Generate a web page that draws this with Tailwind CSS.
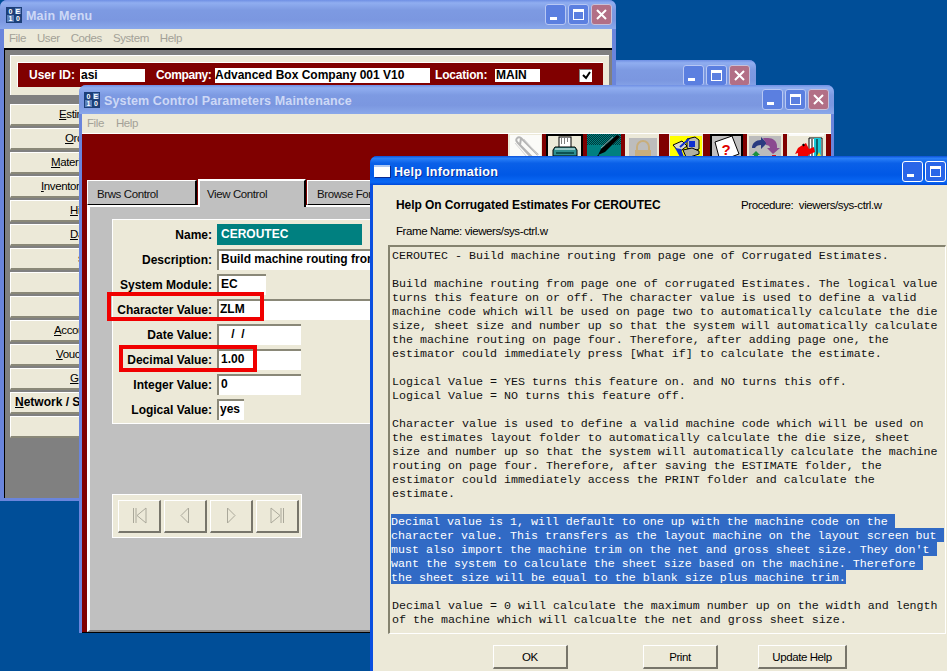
<!DOCTYPE html>
<html>
<head>
<meta charset="utf-8">
<script src="https://cdn.jsdelivr.net/npm/@tailwindcss/browser@4"></script>
</head>
<body class="m-0">
<div class="relative w-[947px] h-[671px] overflow-hidden bg-[#004e98] font-['Liberation_Sans',sans-serif] text-[11.5px] tracking-[-0.4px] leading-[14px] text-black">

  <!-- Second window, behind -->
  <div class="absolute left-[300px] top-[60px] w-[456px] h-[120px] rounded-t-[7px] bg-[#6a85dc]">
    <div class="h-[29px] rounded-t-[7px] pr-[6px] pt-[5px] flex justify-end gap-[2px] bg-[linear-gradient(180deg,#6f8fe4_0%,#90aef0_10%,#7d9ae2_35%,#7b97e0_70%,#8aa8ea_100%)]">
      <div class="relative w-[21px] h-[21px] rounded-[3px] border border-[#b8c8f4] bg-[#5b7fe0]"><div class="absolute left-[4px] bottom-[4px] w-[7px] h-[3px] bg-white"></div></div>
      <div class="relative w-[21px] h-[21px] rounded-[3px] border border-[#b8c8f4] bg-[#5b7fe0]"><div class="absolute left-[4px] top-[4px] w-[11px] h-[11px] border border-white border-t-[3px]"></div></div>
      <div class="w-[21px] h-[21px] rounded-[3px] border border-[#c8c0d8] bg-[#b26f86] flex items-center justify-center"><svg width="13" height="13" viewBox="0 0 13 13"><path d="M2 2l9 9M11 2l-9 9" stroke="#fff" stroke-width="2"/></svg></div>
    </div>
  </div>

  <!-- Main Menu -->
  <div class="absolute left-0 top-0 w-[616px] h-[501px] rounded-t-[7px] bg-[#6a85dc] px-[4px] pb-[3px] flex flex-col">
    <div class="-mx-[4px] h-[29px] shrink-0 rounded-t-[7px] pl-[6px] pr-[4px] flex items-center bg-[linear-gradient(180deg,#6f8fe4_0%,#90aef0_10%,#7d9ae2_35%,#7b97e0_70%,#8aa8ea_100%)]">
      <div class="w-[16px] h-[16px] grid grid-cols-2 grid-rows-2 gap-[1px] bg-[#1c3f78] p-[1px] text-[7px] leading-[7px] font-bold text-center text-white"><span class="bg-[#1c3f78]">0</span><span class="bg-[#5a7fb8]">E</span><span class="bg-[#5a7fb8]">1</span><span class="bg-[#1c3f78]">0</span></div>
      <span class="ml-[4px] mt-[3px] font-bold text-[12.5px] tracking-[0.2px] text-[#cdd8f6]">Main Menu</span>
      <div class="ml-auto flex gap-[2px]">
        <div class="relative w-[21px] h-[21px] rounded-[3px] border border-[#b8c8f4] bg-[#5b7fe0]"><div class="absolute left-[4px] bottom-[4px] w-[7px] h-[3px] bg-white"></div></div>
        <div class="relative w-[21px] h-[21px] rounded-[3px] border border-[#b8c8f4] bg-[#5b7fe0]"><div class="absolute left-[4px] top-[4px] w-[11px] h-[11px] border border-white border-t-[3px]"></div></div>
        <div class="w-[21px] h-[21px] rounded-[3px] border border-[#c8c0d8] bg-[#b26f86] flex items-center justify-center"><svg width="13" height="13" viewBox="0 0 13 13"><path d="M2 2l9 9M11 2l-9 9" stroke="#fff" stroke-width="2"/></svg></div>
      </div>
    </div>
    <div class="h-[19px] shrink-0 bg-[#ece9d8] flex items-center gap-[11px] pl-[5px] pb-[1px] text-[#a3a197]"><span>File</span><span>User</span><span>Codes</span><span>System</span><span>Help</span></div>
    <div class="flex-1 border-t-2 border-l border-black bg-[#808080] pt-[5px] pl-[5px] pr-[3px]">
      <div class="h-[40px] bg-[#ece9d8] border-t border-l border-white pt-[6px] pl-[6px] pr-[6px]">
        <div class="h-[25px] bg-[#800000] border-t border-l border-white flex items-center text-white font-bold text-[12px] tracking-normal">
          <span class="ml-[11px] w-[51px]">User ID:</span>
          <div class="w-[65px] h-[13px] bg-white text-black leading-[13px] pl-px">asi</div>
          <span class="ml-[11px] w-[59px] tracking-[-0.4px]">Company:</span>
          <div class="w-[215px] h-[15px] bg-white text-black leading-[15px]">Advanced Box Company 001 V10</div>
          <span class="ml-[5px] w-[60px] tracking-[-0.2px]">Location:</span>
          <div class="w-[45px] h-[13px] bg-white text-black leading-[13px] pl-px">MAIN</div>
          <div class="ml-[39px] w-[13px] h-[13px] bg-white border-t border-l border-[#808080] flex items-center justify-center"><svg width="9" height="9" viewBox="0 0 9 9"><path d="M1 4l3 3 4-6" fill="none" stroke="#000" stroke-width="2"/></svg></div>
        </div>
      </div>
      <div class="mt-[9px] flex flex-col gap-[2px] w-[150px]">
        <div class="h-[22px] bg-[#ece9d8] border-t border-l border-white border-b-2 border-r-2 border-b-[#8a8878] border-r-[#8a8878] leading-[19px] pl-[48px] whitespace-nowrap"><u>E</u>stimating</div>
        <div class="h-[22px] bg-[#ece9d8] border-t border-l border-white border-b-2 border-r-2 border-b-[#8a8878] border-r-[#8a8878] leading-[19px] pl-[54px] whitespace-nowrap"><u>O</u>rders</div>
        <div class="h-[22px] bg-[#ece9d8] border-t border-l border-white border-b-2 border-r-2 border-b-[#8a8878] border-r-[#8a8878] leading-[19px] pl-[40px] whitespace-nowrap"><u>M</u>aterials</div>
        <div class="h-[22px] bg-[#ece9d8] border-t border-l border-white border-b-2 border-r-2 border-b-[#8a8878] border-r-[#8a8878] leading-[19px] pl-[30px] whitespace-nowrap"><u>I</u>nventory Control</div>
        <div class="h-[22px] bg-[#ece9d8] border-t border-l border-white border-b-2 border-r-2 border-b-[#8a8878] border-r-[#8a8878] leading-[19px] pl-[59px] whitespace-nowrap"><u>H</u>istory</div>
        <div class="h-[22px] bg-[#ece9d8] border-t border-l border-white border-b-2 border-r-2 border-b-[#8a8878] border-r-[#8a8878] leading-[19px] pl-[59px] whitespace-nowrap"><u>D</u>ata</div>
        <div class="h-[22px] bg-[#ece9d8] border-t border-l border-white border-b-2 border-r-2 border-b-[#8a8878] border-r-[#8a8878] leading-[19px] pl-[67px] whitespace-nowrap">s</div>
        <div class="h-[22px] bg-[#ece9d8] border-t border-l border-white border-b-2 border-r-2 border-b-[#8a8878] border-r-[#8a8878]"></div>
        <div class="h-[22px] bg-[#ece9d8] border-t border-l border-white border-b-2 border-r-2 border-b-[#8a8878] border-r-[#8a8878]"></div>
        <div class="h-[22px] bg-[#ece9d8] border-t border-l border-white border-b-2 border-r-2 border-b-[#8a8878] border-r-[#8a8878] leading-[19px] pl-[43px] whitespace-nowrap"><u>A</u>ccounts</div>
        <div class="h-[22px] bg-[#ece9d8] border-t border-l border-white border-b-2 border-r-2 border-b-[#8a8878] border-r-[#8a8878] leading-[19px] pl-[45px] whitespace-nowrap"><u>V</u>ouchers</div>
        <div class="h-[22px] bg-[#ece9d8] border-t border-l border-white border-b-2 border-r-2 border-b-[#8a8878] border-r-[#8a8878] leading-[19px] pl-[59px] whitespace-nowrap"><u>G</u>eneral</div>
        <div class="h-[22px] bg-[#ece9d8] border-t border-l border-white border-b-2 border-r-2 border-b-[#8a8878] border-r-[#8a8878] leading-[19px] pl-[4px] font-bold text-[12px] tracking-normal whitespace-nowrap"><u>N</u>etwork / System</div>
        <div class="h-[22px] bg-[#ece9d8] border-t border-l border-white border-b-2 border-r-2 border-b-[#8a8878] border-r-[#8a8878]"></div>
      </div>
    </div>
  </div>

  <!-- System Control Parameters Maintenance -->
  <div class="absolute left-[79px] top-[85px] w-[755px] h-[548px] rounded-t-[7px] bg-[#6a85dc] px-[3px] flex flex-col">
    <div class="-mx-[3px] h-[29px] shrink-0 rounded-t-[7px] pl-[5px] pr-[5px] flex items-center bg-[linear-gradient(180deg,#6f8fe4_0%,#90aef0_10%,#7d9ae2_35%,#7b97e0_70%,#8aa8ea_100%)]">
      <div class="w-[16px] h-[16px] grid grid-cols-2 grid-rows-2 gap-[1px] bg-[#1c3f78] p-[1px] text-[7px] leading-[7px] font-bold text-center text-white"><span class="bg-[#1c3f78]">0</span><span class="bg-[#5a7fb8]">E</span><span class="bg-[#5a7fb8]">1</span><span class="bg-[#1c3f78]">0</span></div>
      <span class="ml-[4px] mt-[3px] font-bold text-[12.5px] tracking-[0.13px] text-[#cdd8f6]">System Control Parameters Maintenance</span>
      <div class="ml-auto flex gap-[2px]">
        <div class="relative w-[21px] h-[21px] rounded-[3px] border border-[#b8c8f4] bg-[#5b7fe0]"><div class="absolute left-[4px] bottom-[4px] w-[7px] h-[3px] bg-white"></div></div>
        <div class="relative w-[21px] h-[21px] rounded-[3px] border border-[#b8c8f4] bg-[#5b7fe0]"><div class="absolute left-[4px] top-[4px] w-[11px] h-[11px] border border-white border-t-[3px]"></div></div>
        <div class="w-[21px] h-[21px] rounded-[3px] border border-[#c8c0d8] bg-[#b26f86] flex items-center justify-center"><svg width="13" height="13" viewBox="0 0 13 13"><path d="M2 2l9 9M11 2l-9 9" stroke="#fff" stroke-width="2"/></svg></div>
      </div>
    </div>
    <div class="h-[19px] shrink-0 bg-[#ece9d8] flex items-center gap-[12px] pl-[5px] pb-[1px] text-[#a3a197]"><span>File</span><span>Help</span></div>
    <div class="flex-1 min-h-0 border-t border-white bg-[#800000] flex flex-col pl-[5px] pr-[5px] border-b border-b-black">
      <div class="h-[45px] shrink-0 flex items-start justify-end gap-[3px]">
        <svg class="block" width="34" height="23" viewBox="0 0 34 23"><rect width="34" height="23" fill="#ece9d8"/><rect x="2" y="1" width="31" height="22" fill="#fbfbf8"/><path d="M9 8c-2-3 1-6 4-4l17 17M12 11l12 12M9 8l14 15M13 4l-1 7" fill="none" stroke="#b4b4b4" stroke-width="2"/><path d="M7 9l12 14M16 5l14 16" fill="none" stroke="#d5d5d5" stroke-width="1"/></svg>
        <svg class="block ml-[1px]" width="37" height="23" viewBox="0 0 37 23"><rect width="37" height="23" fill="#ece9d8"/><path d="M1 23V1h35v22" fill="none" stroke="#000" stroke-width="2"/><rect x="13" y="3" width="12" height="11" fill="#fff" stroke="#000"/><path d="M15 5h1M18 5h1M21 5h1M15 7h1M18 7h1M21 7h1M15 9h1M18 9h1" stroke="#000"/><path d="M9 13h20l2 3v6H7v-6z" fill="#2f8f8f" stroke="#000"/><path d="M9 15h20" stroke="#fff"/><path d="M10 19h18" stroke="#0c5252" stroke-width="2"/></svg>
        <svg class="block ml-[1px]" width="34" height="23" viewBox="0 0 34 23"><defs><pattern id="dth" width="2" height="2" patternUnits="userSpaceOnUse"><rect width="2" height="2" fill="#008080"/><rect width="1" height="1" fill="#003838"/><rect x="1" y="1" width="1" height="1" fill="#003838"/></pattern></defs><rect width="34" height="23" fill="#008080"/><rect width="34" height="11" fill="url(#dth)"/><path d="M30 1L14 15l-3 6 7-3L33 3z" fill="#000"/><path d="M26 3L14 14" stroke="#9a9a9a"/><path d="M12 21l-3 2" stroke="#000"/></svg>
        <svg class="block ml-[1px]" width="34" height="23" viewBox="0 0 34 23"><rect width="34" height="23" fill="#ece9d8"/><rect x="4" y="4" width="28" height="19" fill="#bdbdbd"/><path d="M12 17v-4a6 6 0 0 1 12 0v4" fill="none" stroke="#c8ae7c" stroke-width="2"/><rect x="10" y="16" width="16" height="7" fill="#c8ae7c"/></svg>
        <div class="w-[4px]"></div>
        <svg class="block" width="34" height="23" viewBox="0 0 34 23"><rect width="34" height="23" fill="#ece9d8"/><rect x="1" y="2" width="32" height="21" fill="#ffff00"/><path d="M4 11l9-4 5 5-8 6z" fill="#d8d8c8" stroke="#000"/><path d="M6 14l5 9h4l-3-8z" fill="#1030d0"/><path d="M18 5l8-2 4 3v9l-5 2-7-3z" fill="#c0c0b0" stroke="#000"/><path d="M20 7h6v6h-6z" fill="#1030d0"/><path d="M14 16l9-2 7 3v3l-9 3h-4z" fill="#b0b0a0" stroke="#000"/><path d="M11 13l9-8" stroke="#1030d0" stroke-width="2"/></svg>
        <svg class="block ml-[4px]" width="33" height="23" viewBox="0 0 33 23"><rect width="33" height="23" fill="#c0c0c0"/><path d="M1 23V1h31v22" fill="none" stroke="#000" stroke-width="2"/><path d="M5 8l17-6 7 18-8 3H9z" fill="#fff" stroke="#000"/><text x="16" y="21" font-family="Liberation Sans" font-weight="700" font-size="15" fill="#e00000" text-anchor="middle">?</text></svg>
        <svg class="block ml-[1px]" width="36" height="23" viewBox="0 0 36 23"><rect width="36" height="23" fill="#ece9d8"/><rect x="2" y="2" width="32" height="21" fill="#bcbcbc"/><path d="M5 14c0-5 4-8 9-8V3l6 6-6 6v-4c-3 0-5 1-6 3z" fill="#2a3a80"/><path d="M16 4h5c5 0 9 3 9 8v2h3l-7 6-6-6h3c0-2-2-3-4-3v-2z" fill="#8a4a90"/><path d="M9 17l4 4H5z" fill="#1a9040"/><rect x="7" y="21" width="4" height="2" fill="#1a9040"/><rect x="25" y="21" width="4" height="2" fill="#d01020"/></svg>
        <svg class="block ml-[1px]" width="39" height="23" viewBox="0 0 39 23"><rect width="39" height="23" fill="#ece9d8"/><rect x="2" y="0" width="35" height="2" fill="#fbfbf8"/><path d="M22 4h13v19H22z" fill="#fff" stroke="#000"/><path d="M27 4h7v19h-7z" fill="#18c8d8"/><path d="M25 5v18M30 5v18" stroke="#000"/><path d="M32 18l2 4h-4z" fill="#f0e020"/><path d="M14 12l5-3 3 6 5-2 1 5-7 3v2H11v-4l-3 1 3-6z" fill="#f00000"/><path d="M16 10l1 2" stroke="#000" stroke-width="2"/></svg>
      </div>
      <div class="h-[26px] shrink-0 flex items-start text-[#111]">
        <div class="mt-[1px] w-[110px] h-[25px] bg-[#c0c0c0] border-t border-l border-white border-r-2 border-r-black border-b border-b-black leading-[26px] pl-[9px]">Brws Control</div>
        <div class="relative z-10 ml-[1px] w-[108px] h-[28px] bg-[#c0c0c0] border-t-2 border-l-2 border-white border-r-2 border-r-black leading-[26px] pl-[7px]">View Control</div>
        <div class="ml-[1px] mt-[1px] w-[110px] h-[25px] bg-[#c0c0c0] border-t border-l border-white border-b border-b-black leading-[26px] pl-[9px] whitespace-nowrap">Browse Form</div>
      </div>
      <div class="flex-1 min-h-0 bg-[#c0c0c0] border-t-2 border-l-[3px] border-white border-b-2 border-b-[#808080] pt-[12px] pl-[22px]">
        <div class="w-[500px] h-[205px] bg-[#ece9d8] border border-white pt-[4px] font-bold text-[12px] tracking-normal flex flex-col gap-[4px]">
          <div class="h-[21px] flex items-center gap-[5px]"><label class="w-[99px] text-right">Name:</label><div class="w-[145px] h-[21px] bg-[#008080] text-white leading-[20px] pl-[4px]">CEROUTEC</div></div>
          <div class="h-[21px] flex items-center gap-[5px]"><label class="w-[99px] text-right">Description:</label><div class="w-[300px] h-[21px] bg-white border-t-2 border-l-2 border-[#8a8878] leading-[17px] pl-[2px] whitespace-nowrap">Build machine routing from page one of Corrugated Estimates</div></div>
          <div class="h-[21px] flex items-center gap-[5px]"><label class="w-[99px] text-right">System Module:</label><div class="w-[49px] h-[21px] bg-white border-t-2 border-l-2 border-[#8a8878] leading-[17px] pl-[2px]">EC</div></div>
          <div class="h-[21px] flex items-center gap-[5px]"><label class="w-[99px] text-right">Character Value:</label><div class="w-[300px] h-[21px] bg-white border-t-2 border-l-2 border-[#8a8878] leading-[17px] pl-[1px]">ZLM</div></div>
          <div class="h-[21px] flex items-center gap-[5px]"><label class="w-[99px] text-right">Date Value:</label><div class="w-[84px] h-[21px] bg-white border-t-2 border-l-2 border-[#8a8878] leading-[17px] pl-[9px] whitespace-pre"> /  /</div></div>
          <div class="h-[21px] flex items-center gap-[5px]"><label class="w-[99px] text-right">Decimal Value:</label><div class="w-[84px] h-[21px] bg-white border-t-2 border-l-2 border-[#8a8878] leading-[17px] pl-[2px]">1.00</div></div>
          <div class="h-[21px] flex items-center gap-[5px]"><label class="w-[99px] text-right">Integer Value:</label><div class="w-[84px] h-[21px] bg-white border-t-2 border-l-2 border-[#8a8878] leading-[17px] pl-[2px]">0</div></div>
          <div class="h-[21px] flex items-center gap-[5px]"><label class="w-[99px] text-right">Logical Value:</label><div class="w-[27px] h-[21px] bg-white border-t-2 border-l-2 border-[#8a8878] leading-[17px] pl-[1px]">yes</div></div>
        </div>
        <div class="mt-[70px] w-[190px] h-[44px] bg-[#ece9d8] border border-white flex items-center gap-[3px] pl-[5px]">
          <div class="w-[43px] h-[33px] border-t border-l border-white border-b-2 border-r-2 border-b-[#77756a] border-r-[#77756a] flex items-center justify-center"><svg width="15" height="17" viewBox="0 0 15 17"><path d="M1.5 1v15M4 1v15" stroke="#aaa89a"/><path d="M14 1L5 8.5 14 16z" fill="none" stroke="#aaa89a"/></svg></div>
          <div class="w-[43px] h-[33px] border-t border-l border-white border-b-2 border-r-2 border-b-[#77756a] border-r-[#77756a] flex items-center justify-center"><svg width="10" height="17" viewBox="0 0 10 17"><path d="M8.5 1L1 8.5l7.5 7.5z" fill="none" stroke="#aaa89a"/></svg></div>
          <div class="w-[43px] h-[33px] border-t border-l border-white border-b-2 border-r-2 border-b-[#77756a] border-r-[#77756a] flex items-center justify-center"><svg width="10" height="17" viewBox="0 0 10 17"><path d="M1.5 1L9 8.5 1.5 16z" fill="none" stroke="#aaa89a"/></svg></div>
          <div class="w-[43px] h-[33px] border-t border-l border-white border-b-2 border-r-2 border-b-[#77756a] border-r-[#77756a] flex items-center justify-center"><svg width="15" height="17" viewBox="0 0 15 17"><path d="M13.5 1v15M11 1v15" stroke="#aaa89a"/><path d="M1 1l9 7.5L1 16z" fill="none" stroke="#aaa89a"/></svg></div>
        </div>
      </div>
    </div>
    <div class="absolute left-[28px] top-[207px] w-[157px] h-[29px] border-[4px] border-[#f00000]"></div>
    <div class="absolute left-[40px] top-[260px] w-[138px] h-[27px] border-[4px] border-[#f00000]"></div>
  </div>

  <!-- Help Information -->
  <div class="absolute left-[370px] top-[156px] w-[640px] h-[560px] rounded-t-[7px] bg-[#0a4fe0] pl-[3px] flex flex-col">
    <div class="-ml-[3px] h-[29px] shrink-0 rounded-t-[7px] pl-[4px] flex items-center bg-[linear-gradient(180deg,#0a50d8_0%,#2a80f8_8%,#0a60e8_25%,#0058e6_65%,#0a68f4_90%,#0048d8_100%)]">
      <div class="w-[16px] h-[12px] bg-white border-t-[2px] border-t-[#b0c8f0] shadow-[1px_1px_0_#0a2a90]"></div>
      <span class="ml-[4px] mt-[3px] font-bold text-[12.5px] tracking-[0.3px] text-white [text-shadow:1px_1px_0_#0a2f9c]">Help Information</span>
      <div class="absolute left-[532px] top-[5px] flex gap-[2px]">
        <div class="relative w-[21px] h-[21px] rounded-[3px] border border-white bg-[#2a66e8]"><div class="absolute left-[4px] bottom-[4px] w-[7px] h-[3px] bg-white"></div></div>
        <div class="relative w-[21px] h-[21px] rounded-[3px] border border-white bg-[#2a66e8]"><div class="absolute left-[4px] top-[4px] w-[11px] h-[11px] border border-white border-t-[3px]"></div></div>
      </div>
    </div>
    <div class="flex-1 bg-[#ece9d8]">
      <div class="pt-[13px] pl-[23px] flex whitespace-nowrap h-[27px]">
        <div class="w-[345px] font-bold text-[12px] tracking-[-0.07px]">Help On Corrugated Estimates For CEROUTEC</div>
        <div>Procedure:&nbsp;&nbsp;viewers/sys-ctrl.w</div>
      </div>
      <div class="mt-[12px] pl-[23px] h-[21px] whitespace-nowrap">Frame Name: viewers/sys-ctrl.w</div>
      <div class="ml-[15px] w-[558px] h-[389px] border-t-2 border-l-2 border-[#85836f] border-b border-b-white border-r border-r-white pl-[1px] pt-[2px] font-['Liberation_Mono',monospace] text-[11.67px] tracking-normal leading-[14px] text-[#111] overflow-hidden">
        <p class="mb-[14px] whitespace-pre pl-px">CEROUTEC - Build machine routing from page one of Corrugated Estimates.</p>
        <p class="mb-[14px] whitespace-pre pl-px">Build machine routing from page one of corrugated Estimates. The logical value
turns this feature on or off. The character value is used to define a valid
machine code which will be used on page two to automatically calculate the die
size, sheet size and number up so that the system will automatically calculate
the machine routing on page four. Therefore, after adding page one, the
estimator could immediately press [What if] to calculate the estimate.</p>
        <p class="mb-[14px] whitespace-pre pl-px">Logical Value = YES turns this feature on. and NO turns this off.
Logical Value = NO turns this feature off.</p>
        <p class="mb-[13px] whitespace-pre pl-px">Character value is used to define a valid machine code which will be used on
the estimates layout folder to automatically calculate the die size, sheet
size and number up so that the system will automatically calculate the machine
routing on page four. Therefore, after saving the ESTIMATE folder, the
estimator could immediately access the PRINT folder and calculate the
estimate.</p>
        <div class="mb-[15px] text-white">
          <div class="w-fit h-[14px] pt-px bg-[#316ac5] whitespace-pre">Decimal value is 1, will default to one up with the machine code on the </div>
          <div class="w-fit h-[14px] pt-px bg-[#316ac5] whitespace-pre">character value. This transfers as the layout machine on the layout screen but </div>
          <div class="w-fit h-[14px] pt-px bg-[#316ac5] whitespace-pre">must also import the machine trim on the net and gross sheet size. They don't </div>
          <div class="w-fit h-[14px] pt-px bg-[#316ac5] whitespace-pre">want the system to calculate the sheet size based on the machine. Therefore </div>
          <div class="w-fit h-[14px] pt-px bg-[#316ac5] whitespace-pre">the sheet size will be equal to the blank size plus machine trim.</div>
        </div>
        <p class="whitespace-pre pl-px">Decimal value = 0 will calculate the maximum number up on the width and length
of the machine which will calcualte the net and gross sheet size.</p>
      </div>
      <div class="mt-[11px] ml-[120px] flex items-start">
        <button class="w-[75px] h-[24px] bg-[#ece9d8] border-t border-l border-white border-b-2 border-r-2 border-b-[#77756a] border-r-[#77756a]">OK</button>
        <button class="ml-[75px] w-[75px] h-[24px] bg-[#ece9d8] border-t border-l border-white border-b-2 border-r-2 border-b-[#77756a] border-r-[#77756a]">Print</button>
        <button class="ml-[40px] w-[89px] h-[24px] bg-[#ece9d8] border-t border-l border-white border-b-2 border-r-2 border-b-[#77756a] border-r-[#77756a]">Update Help</button>
      </div>
    </div>
  </div>
</div>
</body>
</html>
